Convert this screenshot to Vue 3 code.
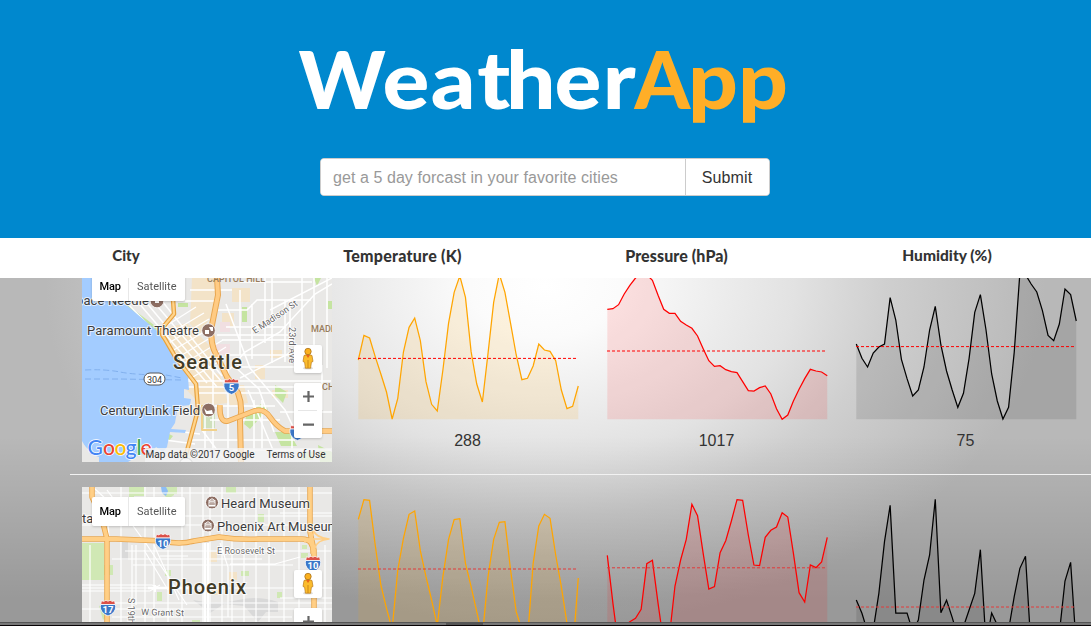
<script setup>
const STEP = 5.64
const charts = [
  {
    id: 'seattle', top: 278, height: 196,
    series: [
      { name: 'temp', avg: 358.4, base: 419.3, label: '288', y0: 270, v: [270,196,204,260,312,366,447,385,246,172,144,212,335,403,423,300,160,67,18,82,245,342,396,250,97,12,67,160,255,329,325,288,222,240,244,272,360,416,409,348] },
      { name: 'pressure', avg: 351, base: 419.3, label: '1017', y0: 270, v: [118,116,104,72,46,24,12,14,31,76,118,130,130,154,165,175,198,236,272,289,287,299,305,308,335,362,363,353,348,372,416,448,435,393,358,326,298,303,306,317] },
      { name: 'humidity', avg: 346.6, base: 419.3, label: '75', y0: 270, v: [222,265,291,249,231,222,83,150,268,326,378,360,291,180,109,225,303,360,412,370,265,127,74,180,312,393,447,412,247,10,14,42,66,122,196,212,162,57,74,153] }
    ]
  },
  {
    id: 'phoenix', top: 475, height: 147,
    series: [
      { name: 'temp', avg: 569, base: 644, label: '', y0: 480, v: [118,59,61,195,315,385,447,270,175,103,93,212,290,360,437,290,178,119,116,250,320,395,470,290,178,127,125,270,395,450,480,250,138,103,115,225,320,430,520,294] },
      { name: 'pressure', avg: 567.8, base: 644, label: '', y0: 480, v: [226,370,500,440,425,415,388,251,241,370,490,470,318,240,178,73,107,220,327,320,218,182,123,59,61,165,255,257,172,151,141,98,111,220,338,366,255,263,246,172] },
      { name: 'humidity', avg: 607, base: 644, label: '', y0: 480, v: [360,400,455,450,340,185,76,399,399,399,455,420,300,225,58,398,361,412,470,440,390,340,209,493,399,435,470,450,350,265,229,508,500,500,500,500,460,303,247,500] }
    ]
  }
]
const line = (s, row) =>
  s.v.map((v, i) => `${(i * STEP + 0.3).toFixed(2)},${(s.y0 + v / 3 - row.top).toFixed(2)}`).join(' ')
const area = (s, row) => `0.3,${s.base - row.top} ${line(s, row)} 220.3,${s.base - row.top}`
</script>

<template>
  <div class="page">
    <svg class="defs" width="0" height="0">
      <symbol id="peg" viewBox="0 0 28 28">
        <rect width="28" height="28" rx="2" fill="#fff" />
        <ellipse cx="14" cy="23.3" rx="5" ry="1.2" fill="#ddd" />
        <path d="M10 10.5q4-2.5 8 0l1 6-1.6.7-.8 6h-5.2l-.8-6-1.6-.7z" fill="#fbbc2d" stroke="#b9781b" stroke-width=".7" />
        <path d="M12 10l2 3 2-3z" fill="#e8641b" />
        <path d="M14 15v8" stroke="#c17c10" stroke-width=".8" />
        <circle cx="14" cy="6.5" r="3.2" fill="#fbb01d" stroke="#a8711d" stroke-width=".8" />
      </symbol>
      <symbol id="shield" viewBox="0 0 17 17">
        <path d="M2 1.2l2.2.8L6.5.7l2 1.1 2-1.1L12.8 2l2.2-.8.8 3.8H1.2z" fill="#db5048" stroke="#fff" stroke-width=".7" />
        <path d="M1.1 5h14.8c1.2 5-1.8 9.500-7.400 11.400C2.900 14.500-.1 10 1.100 5z" fill="#3b78c9" stroke="#fff" stroke-width=".8" />
      </symbol>
      <symbol id="museum" viewBox="0 0 14 14">
        <circle cx="7" cy="7" r="6.500" fill="#8d6e63" stroke="#fff" />
        <path d="M3.500 5.500L7 3.200l3.500 2.300zM4 6.500h6v3.500H4zM3.300 10.500h7.400" fill="none" stroke="#fff" stroke-width="1" />
        <path d="M6 7.500v2M8 7.500v2" stroke="#fff" stroke-width=".8" />
      </symbol>
    </svg>

    <header class="hero">
      <svg class="logo" width="500" height="94" viewBox="295 40 500 94" role="img">
        <text class="brand" fill="#fff" transform="translate(297.500 109) scale(1.02 .98)">W</text>
        <text class="brand" fill="#fff" transform="translate(381.500 109) scale(1.08 .98)" x="0 44.700 87.700 114.400 159.200 204">eather</text>
        <text class="brand" fill="#ffae27" transform="translate(633.500 109) scale(.98 .98)">A</text>
        <text class="brand" fill="#ffae27" transform="translate(687 109) scale(1.08 .98)" x="0 46.300">pp</text>
      </svg>
      <form class="search" @submit.prevent>
        <input type="text" placeholder="get a 5 day forcast in your favorite cities" />
        <button type="submit">Submit</button>
      </form>
    </header>

    <div class="head">
      <span class="h-city">City</span>
      <span class="h-temp">Temperature (K)</span>
      <span class="h-pres">Pressure (hPa)</span>
      <span class="h-hum">Humidity (%)</span>
    </div>

    <main class="list">
      <section v-for="row in charts" :key="row.id" class="row" :class="row.id">
        <svg v-if="row.id === 'seattle'" class="map" width="250" height="184" viewBox="82 278 250 184">
          <rect x="82" y="278" width="250" height="184" fill="#e9e8e6" />
          <g fill="#f3e3c8">
            <path d="M192 278h22l2 30-16 26-10-10zM165 328l22-5 22 22 4 30-20 8-22-32zM184 387h16v-22l20 10 8 28-26 3zM226 385h18l4 18-18 3z" />
            <path d="M232 288h18v14h-18zM222 313h12v14h-12zM255 365h10v14h-10zM270 350h12v8h-12zM272 390h16v8h-16z" />
          </g>
          <path d="M216 344h14v11h-14zM220 322h10v10h-10z" fill="#f1dfe2" />
          <g fill="#c5e4a1">
            <path d="M118 298l40 30 6 10-10-5-38-34zM242 307h5v15h-5zM178 303h10v4h-10zM314 278h7l-4 8zM328 301h4v8h-4zM247 414l14-10 7 5-18 20-6-5zM275 432h14l8 14h-16zM275 385l12 7-4 11-8-8zM301 452h12v8h-12zM318 445l14 7v10h-12zM165 432l8 4-4 5z" />
          </g>
          <path d="M201 410h14v18h-14z" fill="#cfe0bd" />
          <g fill="none" stroke="#fff" stroke-width="1.500">
            <path d="M137 301l70 82M145 301l72 86M153 301l68 80M162 301l60 75M125 301l60 62" />
            <path d="M158 331l38-24M162 338l42-25M167 344l42-25M172 351l42-25M177 358l38-23M181 365l42-25M186 372l40-25M188 380l35-21" stroke-width="1.300" />
            <path d="M190 290h42M185 301h35M217 310h30l10-10h54M240 282h72M226 327h60M222 340h70M217 335h75M225 355h70M232 367h62M186 381h145M188 387h130M195 393h100M200 406h75M210 420h70M190 440h105M233 450h98M280 412h52M290 300v40M240 290v65M252 304v55M265 278v65M272 278v85M285 300v62M314 278v70M327 278v90M322 365v45M254 400v60M262 400v50M292 425v35M302 278v66M213 365v97M228 360v100M205 405v55" />
            <path d="M226 304L250 368 285 410 297 435M332 284l-17 10-35 38-35 20-15 17M233 365l26 24 15 43M165 430l35 4M165 440l30 4M270 310l62-32M240 378l60-30M202 430l24 32M248 390l25 60" />
          </g>
          <path d="M82 278h18v20h18l38 32 12 16 20 31 1 13-5-1v9l7 1-1 6-8 1-5 5-2 12-4 6 15 1-1 3-15-1-3 15-4 5-7-5-8 12-4 4H95l-13-22z" fill="#a3ccff" />
          <path d="M82 443l6 6 2 5 9 3v5H82zM128 462l13-8 17 8z" fill="#e9e8e6" />
          <path d="M157 331l7 8 12 18-3-1z" fill="#d7e7bd" />
          <path d="M85 370q20-1 35 2t46 3l16 3M85 379h35l62 1" fill="none" stroke="#79a8e8" stroke-width=".8" stroke-dasharray="6 3" />
          <g fill="none" stroke-linecap="butt" stroke-linejoin="round">
            <path d="M173 299l1 15-10 12q-5 6 1 13l11 19 20 26 2 26-14 52" stroke="#e7a13e" stroke-width="4.500" />
            <path d="M173 299l1 15-10 12q-5 6 1 13l11 19 20 26 2 26-14 52" stroke="#ffd58d" stroke-width="2.200" />
            <path d="M202 405v25h15" stroke="#f1d18b" stroke-width="2" />
            <path d="M217 278l1 17-6 30q-2 15 2 25l13 27 11 16q5 13 2 27l1 42" stroke="#e8a650" stroke-width="6" />
            <path d="M217 278l1 17-6 30q-2 15 2 25l13 27 11 16q5 13 2 27l1 42" stroke="#ffcb83" stroke-width="4" />
            <path d="M220 405q-1 18 8 16l26-10q10-3 16 6t15 14h47" stroke="#e8a650" stroke-width="5.500" />
            <path d="M220 405q-1 18 8 16l26-10q10-3 16 6t15 14h47" stroke="#ffcb83" stroke-width="3.800" />
          </g>
          <g class="place">
            <text x="76" y="305" textLength="73">pace Needle</text>
            <text x="87" y="335" textLength="112">Paramount Theatre</text>
            <text x="100" y="415" textLength="100">CenturyLink Field</text>
          </g>
          <g fill="#8d6e63" stroke="#fff" stroke-width=".8">
            <circle cx="157" cy="301" r="6.800" /><circle cx="208.500" cy="330.500" r="6.800" /><circle cx="208.500" cy="410" r="6.800" />
          </g>
          <path d="M155 298v5h4v-4zM205 330h4v4h-4zM209 327h4v4h-2z M204 408l3 3 5-1 1 4h-7z" fill="#fff" />
          <text class="city-name" x="173" y="369" textLength="69">Seattle</text>
          <text class="area" x="207" y="282" textLength="58">CAPITOL HILL</text>
          <text class="area" x="311" y="332">MADISON</text>
          <text class="area" x="322" y="390">CHERRY</text>
          <text class="street" transform="translate(255 334) rotate(-34)" textLength="52">E Madison St</text>
          <text class="street" transform="translate(289 327) rotate(90)" textLength="36">23rd Ave</text>
          <rect x="144" y="373" width="21" height="12" rx="6" fill="#fff" stroke="#555" />
          <text class="route" x="154.500" y="382.500">304</text>
          <use href="#shield" x="223" y="378" width="17" height="17" />
          <text class="road-no" x="231.500" y="390.500">5</text>
          <use href="#shield" x="289" y="424" width="17" height="17" />
          <circle cx="186" cy="465" r="7" fill="#fff" stroke="#888" />
          <text class="google" y="455" x="87.500 103 114.500 125.500 136.500 140.500">
            <tspan fill="#4285f4">G</tspan><tspan fill="#ea4335">o</tspan><tspan fill="#fbbc05">o</tspan><tspan fill="#4285f4">g</tspan><tspan fill="#34a853">l</tspan><tspan fill="#ea4335">e</tspan>
          </text>
          <rect x="145" y="448" width="187" height="14" fill="#f5f5f5" fill-opacity=".78" />
          <text class="legal" x="145.500" y="458" textLength="109">Map data ©2017 Google</text>
          <text class="legal" x="266.500" y="458" textLength="59">Terms of Use</text>
          <g class="ctl">
            <rect x="92" y="272" width="93" height="29" rx="2" fill="#fff" />
            <path d="M128.500 278v23" stroke="#e8e8e8" />
            <text class="map-on" x="99.500" y="290" textLength="21.500">Map</text>
            <text class="map-off" x="137" y="290" textLength="39.500">Satellite</text>
          </g>
          <use class="ctl" href="#peg" x="294" y="345" width="28" height="28" />
          <g class="ctl">
            <rect x="294" y="383" width="28" height="55" rx="2" fill="#fff" />
            <path d="M298 410.500h19" stroke="#e6e6e6" />
            <path d="M303 396.500h11M308.500 391v11M303 424.700h11" stroke="#666" stroke-width="2.200" />
          </g>
        </svg>

        <svg v-else class="map" width="250" height="135" viewBox="82 487 250 135">
          <rect x="82" y="487" width="250" height="135" fill="#e9e8e6" />
          <path d="M129 487h15v9h-10v9h-5zM163 487h11v8l-6 4-5-5zM82 543h22v37H82zM101 565h12v10h-12zM226 487h10v6h-10zM258 514h6v8h-6zM99 606l13-6-4 15-5 5zM165 570h6v6h-6zM157 592h5v9h-5zM241 571h8v5h-8zM277 592h5v6h-5zM301 553h7v5h-7zM302 545h5v4h-5zM192 620h8v2h-8zM171 487h6v7h-6z" fill="#d0e8b4" />
          <path d="M161 487h5l2 4-2 5-4-3z" fill="#8ebdf5" />
          <path d="M208 552h9v10h-9zM229 572h8v8h-8zM218 545l-7 16M212 590h9v5h-9z" fill="#f3e3c8" />
          <path d="M193 600q25 5 45 0t40 2v10h-12l-8 10-14-16-20-2-14 9zM121 542h7v18h-7z" fill="#d9d9d9" />
          <g fill="none" stroke="#fff" stroke-width="1.200">
            <path d="M82 493h250M82 516h250M125 551h206M112 559h150M82 585h70l8 3h172M82 588h70M82 591h68l10-6M112 603h220M82 609h250M112 617h180M133 565h160M280 513h52M230 564h45l25-7M82 525h250M280 598h52" />
            <path d="M90 545v77M121 487v135M132 545v77M145 487v135M154 487v135M168 550v72M182 487v135M190 487v58M203 487v135M210 487v135M222 487v135M232 540v82M244 487v135M256 487v135M269 487v135M284 487v135M299 487v135M325 545v77M136 545v60" />
            <path d="M94 488l13 12 2 40M107 490l40 55 40 60M144 550l24 40M154 545l25 55M160 556h28M220 543l8 24v50" />
            <path d="M148 588h40M155 585v7M205 543v79M208 543v79" stroke-width="2.300" />
          </g>
          <g fill="none" stroke-linejoin="round">
            <path d="M92 487v10l10 22 5 20v83M310 487v45l4 18v72M82 539h34l48 2q15 4 30 0l25-4q20 3 40 2h43q12 0 11 15" stroke="#e8a650" stroke-width="5.500" />
            <path d="M92 487v10l10 22 5 20v83M310 487v45l4 18v72M82 539h34l48 2q15 4 30 0l25-4q20 3 40 2h43q12 0 11 15" stroke="#ffcf86" stroke-width="3.800" />
            <path d="M304 542q8-2 10-11 1 6 15 8-12 1-14 9M299 539h30" stroke="#ffcf86" stroke-width="1.600" />
          </g>
          <text class="place" x="82" y="523">ta</text>
          <text class="place" x="221" y="508" textLength="89">Heard Museum</text>
          <text class="place" x="217" y="531" textLength="122">Phoenix Art Museum</text>
          <use href="#museum" x="205" y="495.500" width="14" height="14" />
          <use href="#museum" x="201" y="518.500" width="14" height="14" />
          <text class="city-name" x="168" y="594" textLength="78">Phoenix</text>
          <text class="street" x="217" y="554" textLength="58">E Roosevelt St</text>
          <text class="street" x="141" y="615" textLength="43" transform="rotate(1.500 141 612)">W Grant St</text>
          <text class="street" transform="translate(128 598) rotate(90)">S 19th Ave</text>
          <use href="#shield" x="154.500" y="533" width="17" height="17" />
          <text class="road-no" x="163" y="546.500">10</text>
          <use href="#shield" x="304.500" y="555.500" width="17" height="17" />
          <text class="road-no" x="313" y="569">10</text>
          <use href="#shield" x="99.500" y="599.500" width="17" height="17" />
          <text class="road-no" x="108" y="613">17</text>
          <g class="ctl">
            <rect x="92" y="497" width="93" height="29" rx="2" fill="#fff" />
            <path d="M128.500 497v29" stroke="#e8e8e8" />
            <text class="map-on" x="99.500" y="515" textLength="21.500">Map</text>
            <text class="map-off" x="137" y="515" textLength="39.500">Satellite</text>
          </g>
          <use class="ctl" href="#peg" x="294" y="570" width="28" height="28" />
          <g class="ctl">
            <rect x="294" y="608" width="28" height="55" rx="2" fill="#fff" />
            <path d="M303 621.500h11M308.500 616v11" stroke="#666" stroke-width="2.200" />
          </g>
        </svg>

        <figure v-for="s in row.series" :key="s.name" class="spark" :class="s.name">
          <svg width="221" :height="row.id === 'seattle' ? 150 : 147">
            <polygon :points="area(s, row)" />
            <polyline :points="line(s, row)" />
            <line x1="0" x2="218" :y1="s.avg - row.top" :y2="s.avg - row.top" />
          </svg>
          <figcaption v-if="s.label">{{ s.label }}</figcaption>
        </figure>
      </section>
    </main>
    <footer class="edge"><i></i></footer>
  </div>
</template>

<style>
body { margin: 0; overflow: hidden; }
</style>

<style scoped>
.page { width: 1091px; height: 626px; overflow: hidden; font-family: "Liberation Sans", Arial, sans-serif; color: #333; background: #fff; }
.defs { position: absolute; }
.hero { height: 238px; background: #0088ce; display: flex; flex-direction: column; align-items: center; }
.logo { display: block; margin-top: 40px; overflow: visible; }
.brand { font: 900 81px Lato, sans-serif; }
.search { display: flex; width: 450px; height: 38px; margin: 24px 1px 0 0; box-sizing: border-box; border: 1px solid #ccc; border-radius: 4px; background: #fff; overflow: hidden; }
.search input { flex: 1; min-width: 0; border: 0; outline: 0; padding: 2px 12px 0; font: 16px "Liberation Sans", Arial, sans-serif; letter-spacing: .07px; color: #555; background: #fff; }
.search input::placeholder { color: #999; opacity: 1; }
.search button { width: 84px; border: 0; border-left: 1px solid #ccc; background: #fff; color: #333; padding: 2px 1px 0 0; font: 16px "Liberation Sans", Arial, sans-serif; letter-spacing: .15px; }
.head { height: 40px; display: grid; grid-template-columns: 252px 301px 247px 294px; width: 1094px; background: #fff; font: 900 15px/35px Lato, sans-serif; text-align: center; white-space: nowrap; }
.h-temp { font-size: 16px; letter-spacing: .25px; }
.h-pres { font-size: 16px; letter-spacing: .1px; }
.h-hum { font-size: 15.5px; }
.list { position: relative; height: 344px; overflow: hidden; background: linear-gradient(to bottom, transparent 158px, rgba(0,0,0,.17) 320px), radial-gradient(ellipse 500px 340px at 545px 8px, #fff 0, #fbfbfb 15%, #e2e2e2 50%, #cfcfcf 68%, #b8b8b8 100%); }
.row { display: grid; grid-template-columns: 250px 221px 221px 221px; column-gap: 28px; margin-left: 70px; padding-left: 12px; box-sizing: border-box; width: 1021px; }
.map { display: block; }
.seattle { height: 197px; border-bottom: 1px solid #f2f2f2; }
.phoenix { height: 147px; }
.phoenix .map { margin-top: 12px; }
.spark { margin: 0; position: relative; left: -2px; text-align: center; }
.spark svg { display: block; overflow: visible; }
.spark figcaption { font-size: 16px; line-height: 26px; margin-right: 2px; }
.spark polyline { fill: none; stroke-width: 1.25; }
.spark line { stroke: #f00; stroke-width: 1; stroke-dasharray: 3 2; }
.temp polyline { stroke: orange; }
.temp polygon { fill: orange; fill-opacity: .12; }
.pressure polyline { stroke: red; }
.pressure polygon { fill: red; fill-opacity: .11; }
.humidity polyline { stroke: #000; }
.humidity polygon { fill: #000; fill-opacity: .1; }
.phoenix .spark line { stroke: #e23a3a; }
.place { font: 13px Roboto, sans-serif; fill: #3c3c3c; stroke: #fff; stroke-width: 2px; stroke-opacity: .7; paint-order: stroke; }
.city-name { font: 500 20px Roboto, sans-serif; fill: #413b27; stroke: #fff; stroke-width: 2px; stroke-opacity: .7; paint-order: stroke; }
.area { font: 500 9px Roboto, sans-serif; fill: #997d5c; }
.street { font: 9px Roboto, sans-serif; fill: #666; stroke: #fff; stroke-width: 1.5px; paint-order: stroke; }
.route { font: 9px Roboto, sans-serif; fill: #333; text-anchor: middle; }
.road-no { font: 700 9.5px Roboto, sans-serif; fill: #fff; text-anchor: middle; }
.google { font: 500 21px Lato, sans-serif; stroke: #fff; stroke-width: 1.5px; paint-order: stroke; }
.legal { font: 10px Roboto, sans-serif; fill: #333; }
.ctl { filter: drop-shadow(0 1px 1px rgba(0,0,0,.18)); }
.map-on { font: 500 11px Roboto, sans-serif; fill: #000; }
.map-off { font: 11px Roboto, sans-serif; fill: #565656; }
.edge { height: 4px; box-sizing: border-box; background: #777; border-top: 1px solid #555; border-bottom: 1px solid #080305; }
.edge i { display: block; width: 37px; height: 2px; margin-left: 446px; background: #555; }
</style>
